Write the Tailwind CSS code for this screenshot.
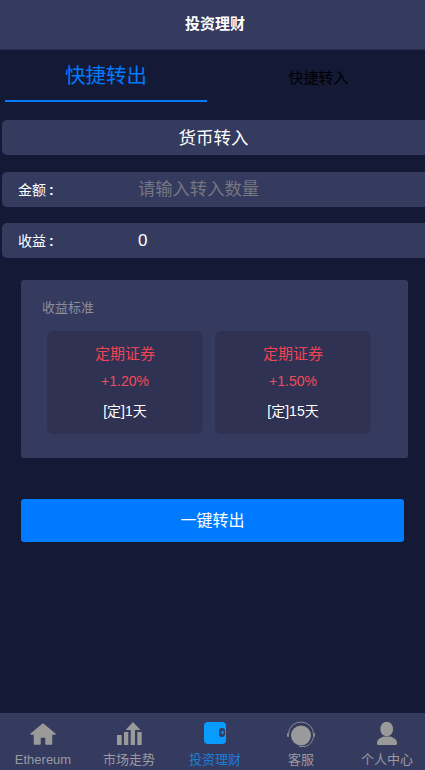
<!DOCTYPE html>
<html lang="zh">
<head>
  <meta charset="UTF-8">
  <meta name="viewport" content="width=device-width, initial-scale=1.0">
  <title>投资理财</title>
  <script src="https://cdn.jsdelivr.net/npm/@tailwindcss/browser@4"></script>
</head>
<body class="bg-[#141935] font-['Liberation_Sans','Noto_Sans_CJK_SC',sans-serif] overflow-hidden">
<div class="relative h-[770px] w-[425px] overflow-hidden">
  <!-- Header -->
  <header class="flex h-[50px] items-center justify-center border-b border-[#2b3050] bg-[#353a5f] pl-[5px]">
    <h1 class="text-[15px] font-bold text-white">投资理财</h1>
  </header>

  <!-- Tabs -->
  <div class="flex h-[52px] pl-[5px]">
    <div class="flex w-[202px] items-center justify-center border-b-2 border-[#007aff] pt-[2px] text-[20.5px] text-[#007aff]">快捷转出</div>
    <div class="flex flex-1 items-center justify-center pt-[4px] pl-[5px] text-[15px] text-black">快捷转入</div>
  </div>

  <!-- Form -->
  <div class="mt-[18px] ml-[2px] flex h-[35px] items-center justify-center rounded-l-[5px] bg-[#353a5f] pt-[1px] text-[17.5px] text-white">货币转入</div>
  <div class="mt-[17px] ml-[2px] flex h-[35px] items-center rounded-l-[5px] bg-[#353a5f] pt-[1px] text-white">
    <span class="w-[136px] pl-[16px] text-[14px]">金额<span class="ml-[3px] font-bold">:</span></span>
    <span class="text-[17.3px] text-[#75767f]">请输入转入数量</span>
  </div>
  <div class="mt-[16px] ml-[2px] flex h-[35px] items-center rounded-l-[5px] bg-[#353a5f] pt-[1px] text-white">
    <span class="w-[136px] pl-[16px] text-[14px]">收益<span class="ml-[3px] font-bold">:</span></span>
    <span class="text-[17px]">0</span>
  </div>

  <!-- Rates -->
  <section class="mt-[22px] ml-[21px] h-[178px] w-[387px] rounded-[3px] bg-[#353a5f] pl-[21px] pt-[19px]">
    <p class="text-[13px] leading-[18px] text-[#8e8f99]">收益标准</p>
    <div class="mt-[14px] ml-[5px] flex gap-[12px]">
      <div class="flex h-[103px] w-[156px] flex-col items-center rounded-[6px] bg-[#2f3253] pt-[13px]">
        <span class="text-[15px] leading-[20px] text-[#ef4454]">定期证券</span>
        <span class="mt-[7px] text-[14px] leading-[20px] text-[#f44a5a]">+1.20%</span>
        <span class="mt-[10px] text-[14px] leading-[20px] text-white">[定]1天</span>
      </div>
      <div class="flex h-[103px] w-[156px] flex-col items-center rounded-[6px] bg-[#2f3253] pt-[13px]">
        <span class="text-[15px] leading-[20px] text-[#ef4454]">定期证券</span>
        <span class="mt-[7px] text-[14px] leading-[20px] text-[#f44a5a]">+1.50%</span>
        <span class="mt-[10px] text-[14px] leading-[20px] text-white">[定]15天</span>
      </div>
    </div>
  </section>

  <button class="mt-[41px] ml-[21px] flex h-[43px] w-[383px] items-center justify-center rounded-[3px] bg-[#007aff] pt-[1px] text-[16px] text-white">一键转出</button>

  <!-- Bottom nav -->
  <nav class="absolute bottom-0 left-0 flex h-[57px] w-[430px] bg-[#353a5f] text-[13px] leading-[15px] text-[#9a9a9f]">
    <div class="flex w-[86px] flex-col items-center pt-[6px]">
      <svg class="h-[28px] w-[28px]" viewBox="0 0 28 28" fill="#9a9a9a" stroke="#9a9a9a" stroke-width="1.500" stroke-linejoin="round"><path d="M14 5 2 15h3.500v10h5.500v-7h6v7h5.500V15H26z"/></svg>
      <span class="mt-[5px]">Ethereum</span>
    </div>
    <div class="flex w-[86px] flex-col items-center pt-[6px]">
      <svg class="h-[28px] w-[28px]" viewBox="0 0 28 28" fill="#9a9a9a"><rect x="2" y="16" width="4.700" height="10"/><rect x="9" y="13" width="4.300" height="13"/><rect x="15.700" y="10" width="4.300" height="16"/><rect x="22.300" y="13" width="4.400" height="13"/><path d="M18 3 10.500 11h15z"/></svg>
      <span class="mt-[5px]">市场走势</span>
    </div>
    <div class="flex w-[86px] flex-col items-center pt-[6px] text-[#1c7ed6]">
      <svg class="h-[28px] w-[28px]" viewBox="0 0 28 28"><rect x="3" y="3" width="22" height="22" rx="4" fill="#0a9bff"/><rect x="18" y="9" width="6" height="9" rx="3" fill="#353a5f"/><rect x="20.500" y="12" width="2" height="3" fill="#0a9bff"/></svg>
      <span class="mt-[5px]">投资理财</span>
    </div>
    <div class="flex w-[86px] flex-col items-center pt-[6px]">
      <svg class="h-[28px] w-[28px]" viewBox="0 0 28 28"><circle cx="14" cy="16.500" r="10" fill="#9a9a9a"/><path d="M1.500 15a12.500 12 0 0 1 25 0" fill="none" stroke="#8a8a90" stroke-width="1"/><rect x="0" y="14" width="2" height="4" rx="1" fill="#8a8a90"/><rect x="26" y="14" width="2" height="4" rx="1" fill="#8a8a90"/><path d="M26.500 18c-1 5-4 8.500-8.500 9.500h-6" fill="none" stroke="#8a8a90" stroke-width="1"/></svg>
      <span class="mt-[5px]">客服</span>
    </div>
    <div class="flex w-[86px] flex-col items-center pt-[6px]">
      <svg class="h-[28px] w-[28px]" viewBox="0 0 28 28" fill="#9a9a9a"><ellipse cx="13.700" cy="10" rx="6.400" ry="7.300"/><path d="M4 24c0-3.500 3-5 6.500-6.500h7c3.500 1.500 6.500 3 6.500 6.500v.5a1.500 1.500 0 0 1-1.500 1.500h-17a1.500 1.500 0 0 1-1.500-1.500z"/></svg>
      <span class="mt-[5px]">个人中心</span>
    </div>
  </nav>
</div>
</body>
</html>
